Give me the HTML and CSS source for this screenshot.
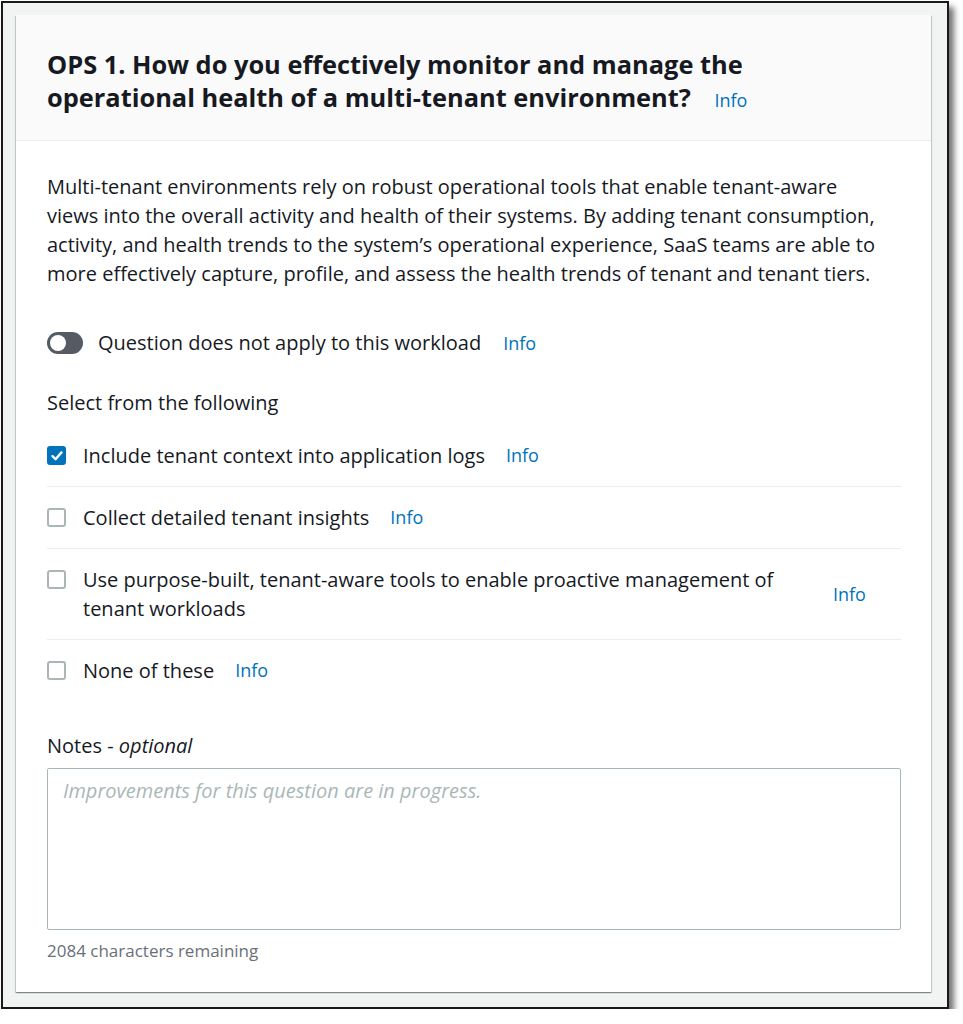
FILE: index.html
```html
<!DOCTYPE html>
<html lang="en">
<head>
    <meta charset="UTF-8">
    <meta name="viewport" content="width=device-width, initial-scale=1.0">
    <title>OPS 1 - Operational health</title>
    <link rel="stylesheet" href="styles.css">
</head>
<body>

    <div class="frame">
        <div class="card">
            <div class="card-header">
                <h2>OPS 1. How do you effectively monitor and manage the operational health of a multi-tenant environment? <a href="#" class="info">Info</a></h2>
            </div>

            <div class="card-body">
                <p class="desc">Multi-tenant environments rely on robust operational tools that enable tenant-aware views into the overall activity and health of their systems. By adding tenant consumption, activity, and health trends to the system’s operational experience, SaaS teams are able to more effectively capture, profile, and assess the health trends of tenant and tenant tiers.</p>

                <div class="toggle-row">
                    <span class="toggle"><span class="knob"></span></span>
                    <span class="toggle-label">Question does not apply to this workload</span>
                    <a href="#" class="info">Info</a>
                </div>

                <div class="select-title">Select from the following</div>

                <!-- choices -->
                <div class="choices">
                    <div class="choice">
                        <span class="box checked">
                            <svg width="14" height="14" viewBox="0 0 14 14"><path d="M2.5 7.2 L5.6 10.2 L11.5 3.4" fill="none" stroke="#fff" stroke-width="2.4" stroke-linecap="round" stroke-linejoin="round"/></svg>
                        </span>
                        <span class="choice-label">Include tenant context into application logs</span>
                        <a href="#" class="info">Info</a>
                    </div>
                    <div class="choice">
                        <span class="box"></span>
                        <span class="choice-label">Collect detailed tenant insights</span>
                        <a href="#" class="info">Info</a>
                    </div>
                    <div class="choice">
                        <span class="box"></span>
                        <span class="choice-label wide">Use purpose-built, tenant-aware tools to enable proactive management of tenant workloads</span>
                        <a href="#" class="info info-mid">Info</a>
                    </div>
                    <div class="choice">
                        <span class="box"></span>
                        <span class="choice-label">None of these</span>
                        <a href="#" class="info">Info</a>
                    </div>
                </div>

                <label class="notes-label" for="notes">Notes - <i>optional</i></label>
                <textarea id="notes" placeholder="Improvements for this question are in progress."></textarea>
                <div class="remaining">2084 characters remaining</div>
            </div>
        </div>
    </div>

</body>
</html>
```

FILE: styles.css
```css
body {
    margin: 0;
    font-family: "Open Sans", Arial, sans-serif;
    color: #16191f;
    background-color: #fff;
}
.frame {
    margin: 1px 0 0 1px;
    width: 915px;
    border: 2px solid #1a1a1a;
    background-color: #f2f3f3;
    padding: 12px 16px 15px 13px;
    box-shadow: 5px 6px 6px rgba(0,0,0,0.55);
}
.card {
    background-color: #fff;
    box-shadow: 0 1px 1px 0 rgba(0,28,36,0.3), 1px 1px 1px 0 rgba(0,28,36,0.15), -1px 1px 1px 0 rgba(0,28,36,0.15);
}
.card-header {
    background-color: #fafafa;
    border-bottom: 1px solid #eaeded;
    padding: 33px 31px 26px 31px;
}
.card-header h2 {
    margin: 0;
    font-size: 25.4px;
    line-height: 33px;
    font-weight: 700;
    max-width: 770px;
}
.info {
    color: #0073bb;
    text-decoration: none;
    font-size: 18px;
    font-weight: 400;
}
.card-header .info {
    margin-left: 17px;
    line-height: 20px;
}
.card-body {
    padding: 31px 30px 29px 31px;
}
.desc {
    margin: 0;
    max-width: 845px;
    font-size: 20px;
    line-height: 29px;
}
.toggle-row {
    display: flex;
    align-items: center;
    height: 29px;
    margin-top: 40px;
    font-size: 20px;
}
.toggle {
    width: 36px;
    height: 22px;
    border-radius: 11px;
    background-color: #545b64;
    position: relative;
    margin-right: 15px;
}
.knob {
    position: absolute;
    left: 3px;
    top: 3px;
    width: 16px;
    height: 16px;
    border-radius: 50%;
    background-color: #fff;
}
.toggle-row .info {
    margin-left: 22px;
}
.select-title {
    margin-top: 31px;
    font-size: 20px;
    line-height: 29px;
}
.choices {
    margin-top: 8px;
}
.choice {
    display: flex;
    align-items: center;
    padding: 16px 0;
    border-bottom: 1px solid #eaeded;
    font-size: 20px;
    line-height: 29px;
}
.choice:last-child {
    border-bottom: none;
}
.box {
    box-sizing: border-box;
    width: 19px;
    height: 19px;
    border: 2px solid #aab7b8;
    border-radius: 3px;
    margin-right: 17px;
    align-self: flex-start;
    margin-top: 5px;
    flex-shrink: 0;
    display: flex;
    align-items: center;
    justify-content: center;
}
.box.checked {
    background-color: #0073bb;
    border-color: #0073bb;
}
.choice .info {
    margin-left: 21px;
}
.choice-label.wide {
    width: 720px;
}
.choice .info-mid {
    margin-left: 30px;
}
.notes-label {
    display: block;
    margin-top: 30px;
    font-size: 20px;
    line-height: 29px;
}
textarea {
    display: block;
    box-sizing: border-box;
    width: 100%;
    height: 162px;
    margin-top: 8px;
    border: 1px solid #aab7b8;
    border-radius: 2px;
    padding: 8px 15px;
    font-family: "Open Sans", Arial, sans-serif;
    font-size: 20px;
    resize: none;
}
textarea::placeholder {
    color: #aab7b8;
    font-style: italic;
}
.remaining {
    margin-top: 9px;
    font-size: 17px;
    line-height: 24px;
    color: #687078;
}
```
